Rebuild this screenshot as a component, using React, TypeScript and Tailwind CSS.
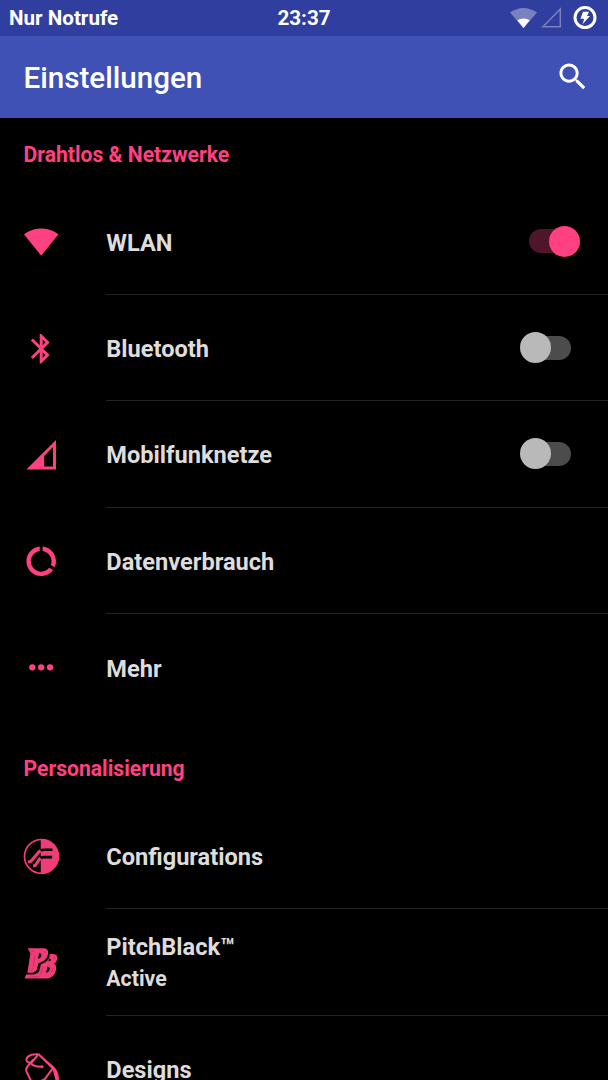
import type { ReactNode } from 'react'
import clsx from 'clsx'

interface SettingsItem {
  title: string
  summary?: string
  icon: ReactNode
  // undefined means the row has no switch
  enabled?: boolean
}

const ICON = 'block size-[35.5px] overflow-visible fill-[#ff4081]'

function WifiIcon() {
  return (
    <svg viewBox="-0.3 0 24 24" className={ICON}>
      <path d="M12.01 21.49L23.64 7C23.19 6.66 18.71 3 12 3S.81 6.66.36 7z" />
    </svg>
  )
}

function BluetoothIcon() {
  return (
    <svg viewBox="-0.3 0 24 24" className={ICON}>
      <path d="M17.71 7.71L12 2h-1v7.59L6.41 5 5 6.41 10.59 12 5 17.59 6.41 19 11 14.41V22h1l5.71-5.71-4.3-4.29 4.3-4.29zM13 5.83l1.88 1.88L13 9.59V5.83zm1.88 10.46L13 18.17v-3.76l1.88 1.88z" />
    </svg>
  )
}

function CellularIcon() {
  return (
    <svg viewBox="-0.3 0 24 24" className={ICON}>
      <path fillRule="evenodd" d="M2 22h20V2zM14 20v-7.2l6-6V20z" />
    </svg>
  )
}

function DataUsageIcon() {
  return (
    <svg viewBox="-0.3 0.3 24 24" className={ICON}>
      <path d="M13 2.05v3.03c3.39.49 6 3.39 6 6.92 0 .9-.18 1.75-.48 2.54l2.6 1.53c.56-1.24.88-2.62.88-4.07 0-5.18-3.95-9.45-9-9.95zM12 19c-3.87 0-7-3.13-7-7 0-3.53 2.61-6.43 6-6.92V2.05c-5.06.5-9 4.76-9 9.95 0 5.52 4.47 10 9.99 10 3.31 0 6.24-1.61 8.06-4.09l-2.6-1.53C16.17 17.98 14.21 19 12 19z" />
    </svg>
  )
}

function MoreIcon() {
  return (
    <svg viewBox="-0.3 0.3 24 24" className={ICON}>
      <circle cx="6" cy="12" r="2.15" />
      <circle cx="12" cy="12" r="2.15" />
      <circle cx="18" cy="12" r="2.15" />
    </svg>
  )
}

// The stripes swap colour where they cross into the filled half
function ConfigurationsIcon() {
  return (
    <svg viewBox="40 42 106 106" className="block size-[35.5px] overflow-visible fill-none">
      <circle cx="95" cy="94" r="50.5" stroke="#f03c79" strokeWidth="5" />
      <path d="M93 42h2a52 52 0 0 1 0 104h-2z" fill="#f03c79" />
      <g stroke="#f03c79" strokeWidth="9">
        <path d="M55 110H61Q64 109 66 106L82 87Q87 80 93 77" />
        <path d="M70 122H75Q78 121 80 116L89 103L93 99" />
      </g>
      <g stroke="#000" strokeWidth="8">
        <path d="M93 77Q97 74 103 74H128" />
        <path d="M93 99Q97 96 104 96H127" />
      </g>
    </svg>
  )
}

function PitchBlackIcon() {
  return (
    <svg viewBox="40 43 106 106" className="block size-[35.5px] overflow-visible fill-[#f03c79]">
      <path
        fillRule="evenodd"
        d="M54 53H104Q116 54 115 70Q112 84 101 91L86 98L82 114Q78 125 66 126H53L62 68Q60 64 54 53zM88 68L85 84Q94 82 95 73Q95 68 88 68z"
      />
      <path
        fillRule="evenodd"
        d="M120 70H130Q146 72 142 87Q139 95 133 99Q142 105 138 120Q132 140 115 143H45L49 131H72Q86 130 90 116L93 101L108 94Q119 86 120 70zM118 83L116 92Q124 91 124 86zM113 107L109 126Q119 123 120 113Q120 107 113 107z"
      />
      <g className="fill-none stroke-[#a52953]" strokeWidth="1.5">
        <path d="M62 60l12 2M76 73l-6 35M102 61l7 8M62 121l10-8M60 138h28M99 106l-6 24M131 77l5 9M130 111l-5 15" />
      </g>
    </svg>
  )
}

function DesignsIcon() {
  return (
    <svg viewBox="40 48 106 106" className="block size-[35.5px] overflow-visible fill-none stroke-[#ff4081]">
      <path
        d="M71 70L53 92Q47 99 51 108L63 132Q68 143 80 140L104 130L129 97L86 54"
        strokeWidth="6"
        strokeLinejoin="round"
      />
      <path d="M87 55Q66 53 56 61Q45 70 54 78Q61 82 68 77L84 57" strokeWidth="6" />
      <path d="M62 79Q67 92 96 92" strokeWidth="6" />
      <circle cx="97" cy="92" r="4" fill="#ff4081" />
      <path d="M88 54L122 82Q150 103 147 132Q143 141 137 132L128 99z" fill="#ff4081" stroke="none" />
    </svg>
  )
}

const NETWORK: SettingsItem[] = [
  { title: 'WLAN', icon: <WifiIcon />, enabled: true },
  { title: 'Bluetooth', icon: <BluetoothIcon />, enabled: false },
  { title: 'Mobilfunknetze', icon: <CellularIcon />, enabled: false },
  { title: 'Datenverbrauch', icon: <DataUsageIcon /> },
  { title: 'Mehr', icon: <MoreIcon /> },
]

const PERSONAL: SettingsItem[] = [
  { title: 'Configurations', icon: <ConfigurationsIcon /> },
  { title: 'PitchBlack™', summary: 'Active', icon: <PitchBlackIcon /> },
  { title: 'Designs', icon: <DesignsIcon /> },
]

function Switch({ on }: { on: boolean }) {
  return (
    <span
      className={clsx(
        'relative block h-6 w-[43px] rounded-full',
        on ? 'mr-9 bg-[#4f152a]' : 'mr-[37px] bg-[#4c4c4c]'
      )}
    >
      <span
        className={clsx(
          'absolute -top-[3.5px] size-[31px] rounded-full',
          on ? '-right-2 bg-[#ff4081]' : '-left-[8.5px] bg-[#b9b9b9]'
        )}
      />
    </span>
  )
}

function Row({ item }: { item: SettingsItem }) {
  return (
    <li className="group flex h-[106.4px] shrink-0 pl-[23px]">
      <div className="flex w-[83.3px] shrink-0 items-center pt-px">{item.icon}</div>
      <div className="flex flex-1 items-center border-b border-[#242424] group-last:border-0">
        <div className={clsx('flex-1', item.summary ? 'pt-1' : 'pt-[3px]')}>
          <div className="text-[23.6px] leading-[30px]">{item.title}</div>
          {item.summary && <div className="text-[21.3px] leading-[33px]">{item.summary}</div>}
        </div>
        {item.enabled !== undefined && <Switch on={item.enabled} />}
      </div>
    </li>
  )
}

function Section({ title, items }: { title: string; items: SettingsItem[] }) {
  return (
    <section className="h-[614.3px] shrink-0">
      <h2 className="h-[70.5px] pl-[23.5px] pt-[21px] text-[21.15px] leading-[31.5px] font-bold text-[#ff4081]">
        {title}
      </h2>
      <ul>
        {items.map((item) => (
          <Row key={item.title} item={item} />
        ))}
      </ul>
    </section>
  )
}

function StatusBar() {
  return (
    <div className="grid h-[35.5px] shrink-0 grid-cols-3 items-center bg-[#303f9f] text-[20.6px] font-bold text-white">
      <span className="pt-0.5 pl-[9px]">Nur Notrufe</span>
      <span className="pt-0.5 text-center">23:37</span>
      <div className="flex items-center justify-end gap-1 pr-[11px]">
        <svg viewBox="0 0 27 20" className="block h-5 w-[27px]">
          <path d="M0 4.5Q13.5-4.5 27 4.5L13.5 20z" fill="#fff" fillOpacity=".35" />
          <path d="M7.2 12.3Q13.5 8.8 19.8 12.3L13.5 20z" fill="#fff" />
        </svg>
        <svg viewBox="0 0 21 21" className="block size-[21px]">
          <path d="M2 19.7H19.3V2z" fill="none" stroke="#fff" strokeOpacity=".35" strokeWidth="1.5" />
        </svg>
        <svg viewBox="0 0 24 24" className="ml-[7px] block size-6">
          <circle cx="12" cy="11.6" r="10" fill="none" stroke="#fff" strokeWidth="3" />
          <path d="M10 5.8h6l-2 4.2h3L9.5 18.3l1.7-5.5H7.5z" fill="#fff" />
        </svg>
      </div>
    </div>
  )
}

export default function App() {
  return (
    <div className="flex h-[1080px] w-[608px] flex-col overflow-hidden bg-black font-[Roboto,sans-serif] font-bold text-[#dedcdc]">
      <StatusBar />
      <header className="flex h-[82.5px] shrink-0 items-center justify-between bg-[#3f51b5] pr-[18px] pl-[23.5px]">
        <h1 className="pt-0.5 text-[29.6px] font-medium text-white">Einstellungen</h1>
        <svg viewBox="0 0 24 24" className="block size-[35.5px] fill-white">
          <path d="M15.5 14h-.79l-.28-.27C15.41 12.59 16 11.11 16 9.5 16 5.91 13.09 3 9.5 3S3 5.91 3 9.5 5.91 16 9.5 16c1.61 0 3.09-.59 4.23-1.57l.27.28v.79l5 4.99L20.49 19l-4.99-5zm-6 0C7.01 14 5 11.99 5 9.5S7.01 5 9.5 5 14 7.01 14 9.5 11.99 14 9.5 14z" />
        </svg>
      </header>
      <Section title="Drahtlos & Netzwerke" items={NETWORK} />
      <Section title="Personalisierung" items={PERSONAL} />
    </div>
  )
}
